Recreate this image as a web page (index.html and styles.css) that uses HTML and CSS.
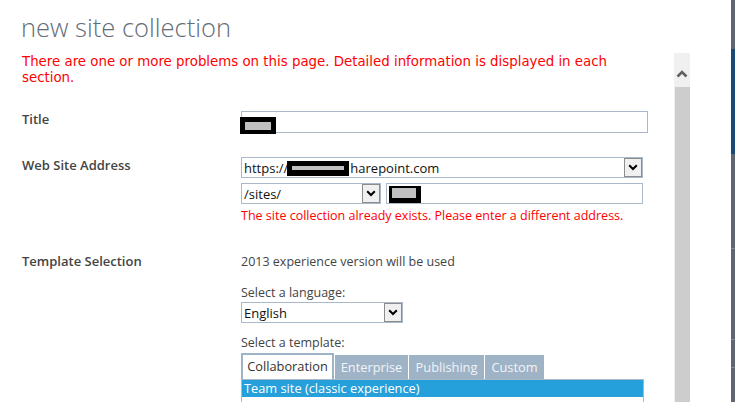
FILE: index.html
```html
<!DOCTYPE html>
<html>
<head>
<meta charset="utf-8">
<title>new site collection</title>
<link rel="stylesheet" href="styles.css">
</head>
<body>
<div class="page">
  <div class="dialog">
    <h1 class="page-title">new site collection</h1>
    <div class="dialog-body">
      <div class="content">
        <div class="page-error">There are one or more problems on this page. Detailed information is displayed in each section.</div>

        <div class="section sec-title">
          <div class="label">Title</div>
          <div class="field">
            <div class="textbox tb-title"><span class="redact r-title"></span></div>
          </div>
        </div>

        <div class="section sec-web">
          <div class="label">Web Site Address</div>
          <div class="field">
            <div class="select sel-host">
              <span class="val">https://<span class="redact-inline"></span>harepoint.com</span>
              <span class="arrow"><svg width="10" height="7" viewBox="0 0 10 7"><polyline points="1.2,1.2 5,5 8.8,1.2" fill="none" stroke="#000" stroke-width="2"/></svg></span>
            </div>
            <div class="row2">
              <div class="select sel-sites">
                <span class="val">/sites/</span>
                <span class="arrow"><svg width="10" height="7" viewBox="0 0 10 7"><polyline points="1.2,1.2 5,5 8.8,1.2" fill="none" stroke="#000" stroke-width="2"/></svg></span>
              </div>
              <div class="textbox tb-url"><span class="redact r-url"></span></div>
            </div>
            <div class="field-error">The site collection already exists. Please enter a different address.</div>
          </div>
        </div>

        <div class="section sec-template">
          <div class="label">Template Selection</div>
          <div class="field">
            <div class="note">2013 experience version will be used</div>
            <div class="caption cap-lang">Select a language:</div>
            <div class="select sel-lang">
              <span class="val">English</span>
              <span class="arrow"><svg width="10" height="7" viewBox="0 0 10 7"><polyline points="1.2,1.2 5,5 8.8,1.2" fill="none" stroke="#000" stroke-width="2"/></svg></span>
            </div>
            <div class="caption cap-tpl">Select a template:</div>
            <div class="tabs">
              <div class="tab active t-collab">Collaboration</div>
              <div class="tab t-ent">Enterprise</div>
              <div class="tab t-pub">Publishing</div>
              <div class="tab t-custom">Custom</div>
            </div>
            <div class="list">
              <div class="list-item selected">Team site (classic experience)</div>
            </div>
          </div>
        </div>
      </div>
      <div class="scrollbar">
        <div class="sb-up"><svg width="12" height="8" viewBox="0 0 12 8"><polyline points="1.5,6.5 6,2 10.5,6.5" fill="none" stroke="#606060" stroke-width="2.6"/></svg></div>
        <div class="sb-thumb"></div>
      </div>
    </div>
  </div>
  <div class="strip">
    <div class="strip-a"></div>
    <div class="strip-blue"></div>
    <div class="strip-b"></div>
    <div class="strip-c"></div>
    <div class="strip-d"></div>
    <div class="strip-e"></div>
  </div>
</div>
</body>
</html>
```
FILE: styles.css
```css
html, body {
  margin: 0;
  padding: 0;
  background: #fff;
}
body {
  font-family: "Open Sans", "Liberation Sans", sans-serif;
  font-size: 12.5px;
  color: #444;
}
.page {
  display: flex;
  width: 735px;
  height: 402px;
  overflow: hidden;
}
.dialog {
  width: 731px;
  display: flex;
  flex-direction: column;
}
.page-title {
  margin: 0;
  padding: 10px 0 0 21px;
  height: 34px;
  font: 300 25.5px/34px "Open Sans", sans-serif;
  color: #646d76;
  white-space: nowrap;
}
.dialog-body {
  display: flex;
  margin-top: 9px;
  margin-right: 41px;
  flex: 1;
  min-height: 0;
}
.content {
  flex: 1;
  padding-left: 22px;
  overflow: hidden;
}
.page-error {
  margin-top: 1px;
  max-width: 600px;
  font: 13.35px/16px "DejaVu Sans", Verdana, sans-serif;
  color: #f00;
}
.section {
  display: grid;
  grid-template-columns: 219px 1fr;
}
.sec-title { margin-top: 25px; }
.sec-web { margin-top: 24px; }
.sec-template { margin-top: 29px; }
.label {
  font: 600 13px/17px "Open Sans", sans-serif;
  color: #444;
}
.textbox {
  position: relative;
  box-sizing: border-box;
  border: 1px solid #a9b9c9;
  background: #fff;
}
.tb-title {
  width: 407px;
  height: 22px;
}
.redact {
  position: absolute;
  box-sizing: border-box;
  background: #c0c0c0;
  border-style: solid;
  border-color: #000;
}
.r-title {
  left: -2px;
  top: 5px;
  width: 36px;
  height: 17px;
  border-width: 5px 5px 4px 5px;
}
.r-url {
  left: 2px;
  top: 2px;
  width: 32px;
  height: 17px;
  border-width: 2px 5px 5px 3px;
}
.select {
  box-sizing: border-box;
  height: 21px;
  border: 1px solid #a9b9c9;
  background: #fff;
  display: flex;
  align-items: stretch;
}
.select .val {
  flex: 1;
  padding: 1px 0 0 2px;
  font-size: 13px;
  line-height: 19px;
  color: #111;
  white-space: nowrap;
  overflow: hidden;
}
.arrow {
  box-sizing: border-box;
  width: 18px;
  background: #f0f0f0;
  border: 1px solid #8c8c8c;
  display: flex;
  align-items: center;
  justify-content: center;
}
.redact-inline {
  display: inline-block;
  box-sizing: border-box;
  width: 62px;
  height: 15px;
  margin: 0 1px 0 -1px;
  vertical-align: -3px;
  background: #c0c0c0;
  border: solid #000;
  border-width: 5px 5px 6px 5px;
}
.sel-host { width: 402px; }
.row2 {
  display: flex;
  gap: 5px;
  margin-top: 5px;
}
.sel-sites { width: 140px; }
.tb-url {
  width: 257px;
  height: 21px;
}
.field-error {
  margin-top: 2.6px;
  line-height: 17px;
  color: #f00;
}
.note {
  line-height: 17px;
}
.caption {
  line-height: 17px;
}
.cap-lang { margin-top: 14.2px; }
.sel-lang {
  width: 162px;
  margin-top: 1.4px;
}
.cap-tpl { margin-top: 10.6px; }
.tabs {
  display: flex;
  align-items: flex-end;
  gap: 1px;
  margin-top: 2.4px;
}
.tab {
  box-sizing: border-box;
  height: 24px;
  line-height: 24px;
  text-align: center;
  font-size: 12.8px;
  background: #9fb3c7;
  color: #f0f4f8;
  white-space: nowrap;
}
.tab.active {
  height: 26px;
  line-height: 22px;
  background: #fff;
  color: #333;
  border: 2px solid #9fb3c7;
  border-bottom: none;
}
.t-collab { width: 93px; }
.t-ent { width: 73px; }
.t-pub { width: 75px; }
.t-custom { width: 59px; }
.list {
  box-sizing: border-box;
  width: 403px;
  height: 120px;
  border: 1px solid #a9b9c9;
}
.list-item {
  height: 17px;
  line-height: 17px;
  padding-left: 2px;
  font-size: 12.8px;
  white-space: nowrap;
}
.list-item.selected {
  background: #26a0da;
  color: #fff;
}
.scrollbar {
  width: 16px;
  background: #f0f0f0;
  display: flex;
  flex-direction: column;
}
.sb-up {
  height: 34px;
  display: flex;
  justify-content: center;
  padding-top: 17px;
  box-sizing: border-box;
}
.sb-thumb {
  flex: 1;
  background: #cdcdcd;
  margin-left: 1px;
}
.strip {
  width: 4px;
  display: flex;
  flex-direction: column;
  background: #5f6670;
}
.strip-a { height: 49px; }
.strip-blue { height: 105px; background: #174a77; }
.strip-b { height: 94px; }
.strip-c { height: 90px; border-top: 1px solid #7c8590; }
.strip-d { height: 27px; border-top: 1px solid #7c8590; }
.strip-e { flex: 1; border-top: 1px solid #7c8590; }
```
